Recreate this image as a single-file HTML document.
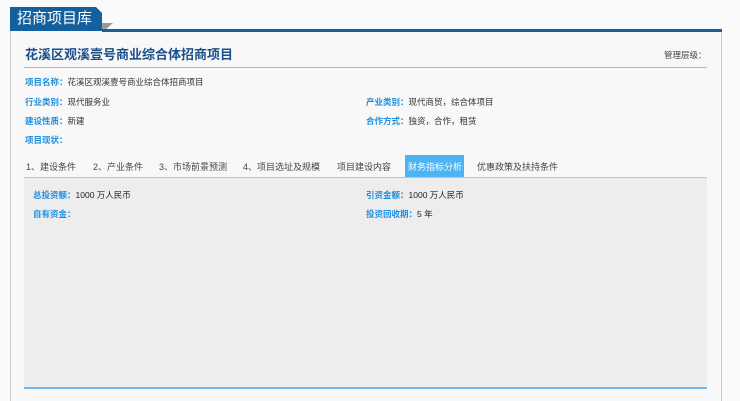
<!DOCTYPE html>
<html><head><meta charset="utf-8"><style>
*{margin:0;padding:0;box-sizing:border-box}
html,body{width:740px;height:401px;overflow:hidden}
body{background:#fafafa;font-family:"Liberation Sans","Noto Sans CJK SC",sans-serif;position:relative;font-size:8.5px;color:#333}
.a{position:absolute;white-space:nowrap}
.l{color:#1e8fe0;font-weight:bold}
</style></head><body>
<div class="a" style="left:10px;top:31px;width:712px;height:380px;border-left:1px solid #ccc;border-right:1px solid #ccc;background:#f8f8f8"></div>
<svg class="a" style="left:0;top:0" width="740" height="35">
<polygon points="10,7 96,7 102,13 102,31 10,31" fill="#145f9e"/>
<polygon points="102,23 113,23 104,31 102,31" fill="#999"/>
<rect x="102" y="29" width="620" height="3" fill="#145f9e"/>
</svg>
<div class="a" style="left:17px;top:9px;color:#fff;font-size:15px;line-height:20px">招商项目库</div>
<div class="a" style="left:25px;top:46px;color:#1a4f8a;font-size:13px;font-weight:bold;line-height:18px">花溪区观溪壹号商业综合体招商项目</div>
<div class="a" style="left:664px;top:49px;font-size:8.5px;color:#444">管理层级：</div>
<div class="a" style="left:24px;top:67px;width:683px;height:1px;background:#8bbfe8"></div>
<div class="a" style="left:25px;top:76px"><span class="l">项目名称：</span>花溪区观溪壹号商业综合体招商项目</div>
<div class="a" style="left:25px;top:96px"><span class="l">行业类别：</span>现代服务业</div>
<div class="a" style="left:366px;top:96px"><span class="l">产业类别：</span>现代商贸，综合体项目</div>
<div class="a" style="left:25px;top:115px"><span class="l">建设性质：</span>新建</div>
<div class="a" style="left:366px;top:115px"><span class="l">合作方式：</span>独资，合作，租赁</div>
<div class="a" style="left:25px;top:134px"><span class="l">项目现状：</span></div>
<div class="a" style="left:405px;top:155px;width:59px;height:22px;background:#4cb3f5"></div>
<div class="a" style="top:160px;left:0;width:740px;font-size:9px;color:#444">
<span class="a" style="left:26px">1、建设条件</span>
<span class="a" style="left:93px">2、产业条件</span>
<span class="a" style="left:159px">3、市场前景预测</span>
<span class="a" style="left:243px">4、项目选址及规模</span>
<span class="a" style="left:337px">项目建设内容</span>
<span class="a" style="left:408px;color:#fff">财务指标分析</span>
<span class="a" style="left:477px">优惠政策及扶持条件</span>
</div>
<div class="a" style="left:24px;top:177px;width:683px;height:212px;background:#ededed;border-top:1px solid #a9cbe8;border-bottom:2px solid #6fbbee"></div>
<div class="a" style="left:33px;top:189px;color:#222"><span class="l">总投资额：</span>1000 万人民币</div>
<div class="a" style="left:366px;top:189px;color:#222"><span class="l">引资金额：</span>1000 万人民币</div>
<div class="a" style="left:33px;top:208px"><span class="l">自有资金：</span></div>
<div class="a" style="left:366px;top:208px;color:#222"><span class="l">投资回收期：</span>5 年</div>
</body></html>
